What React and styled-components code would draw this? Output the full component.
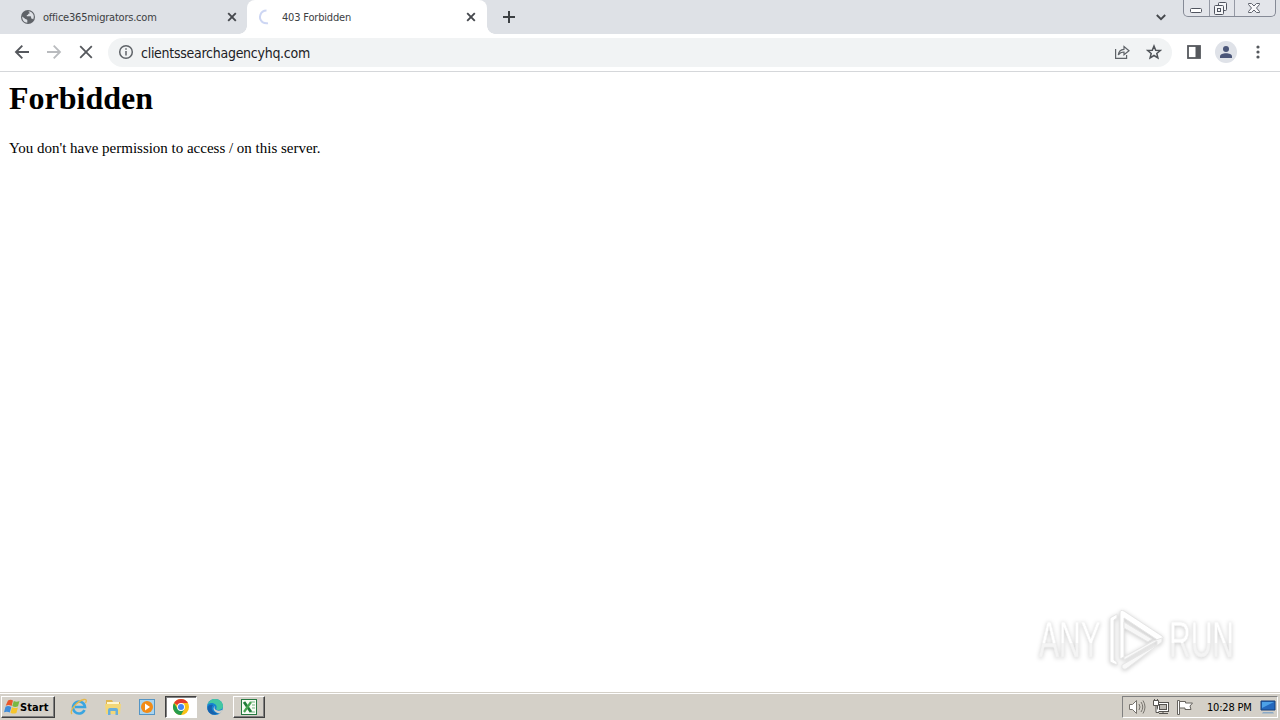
import React from 'react';
import styled, { createGlobalStyle, css } from 'styled-components';

const App = () => {
  return (
    <>
      <GlobalStyle />
      <StyledScreen>
        <TabStrip />
        <Toolbar />
        <StyledPage>
          <StyledTitle>Forbidden</StyledTitle>
          <StyledMessage>You don't have permission to access / on this server.</StyledMessage>
          <Watermark />
        </StyledPage>
        <Taskbar />
      </StyledScreen>
    </>
  );
};

const CloseIcon = () => (
  <svg width="10" height="10" viewBox="0 0 10 10" fill="none" stroke="#45484d" strokeWidth="1.9">
    <path d="M1.2 1.2l7.6 7.6M8.8 1.2L1.2 8.8" />
  </svg>
);

const TabStrip = () => (
  <StyledTabStrip>
    <StyledTab>
      <svg width="16" height="16" viewBox="0 0 16 16">
        <circle cx="8" cy="8" r="7" fill="#5f6368" />
        <path d="M2.2 7.4l3.2 2.5c.9.5 1.8.3 1.9 1.2v2.6C4.300 13.500 2 11 2.200 7.400z" fill="#dee1e6" />
        <path d="M8.200 2.200c2.200.1 4 1.200 5 3.100.9 1.800.7 3.700-.1 5.300-.5-.9-1-1-2-1V8.300c0-.7-.4-1-1-1H6.800V6c1.200 0 1.400-.2 1.400-1.300h1.200V3.200z" fill="#dee1e6" />
      </svg>
      <StyledTabTitle $indent="7px" $spacing="-0.22px">office365migrators.com</StyledTabTitle>
      <CloseIcon />
    </StyledTab>
    <StyledTab $active>
      <svg width="16" height="16" viewBox="0 0 16 16" fill="none" stroke="#cdd6f3" strokeWidth="2">
        <path d="M9.500 1.500A6.500 6.500 0 0 0 5.500 13.100Q8 14.800 11 14.200" />
      </svg>
      <StyledTabTitle $indent="9px" $spacing="-0.18px">403 Forbidden</StyledTabTitle>
      <CloseIcon />
    </StyledTab>
    <StyledNewTab>
      <svg width="12" height="12" viewBox="0 0 12 12" stroke="#3c4043" strokeWidth="2">
        <path d="M6 0v12M0 6h12" />
      </svg>
    </StyledNewTab>
    <StyledTabSearch>
      <svg width="10" height="7" viewBox="0 0 10 7" fill="none" stroke="#45484d" strokeWidth="1.9">
        <path d="M.8 1L5 5.200 9.200 1" />
      </svg>
    </StyledTabSearch>
    <StyledWindowControls>
      <StyledControl $width="25px">
        <svg width="24" height="16" viewBox="0 0 24 16">
          <rect x="6.500" y="8.500" width="11" height="4" rx="1" fill="#fff" stroke="#50545f" />
        </svg>
      </StyledControl>
      <StyledControl $width="25px">
        <svg width="24" height="16" viewBox="0 0 24 16" fill="#f5f6f8" stroke="#50545f">
          <rect x="8.500" y="2.500" width="8" height="8" rx="1" />
          <rect x="4.500" y="5.500" width="9" height="9" rx="1" />
          <rect x="7.500" y="8.500" width="3" height="3" />
        </svg>
      </StyledControl>
      <StyledControl $width="41px">
        <svg width="40" height="16" viewBox="0 0 40 16" fill="#f8f8fa" stroke="#60646e">
          <path d="M13.500 3.500h3l2.500 2.500 2.500-2.500h3v1L21.500 8l3 3.500v1h-3L19 10l-2.500 2.500h-3v-1L16.500 8l-3-3.500z" />
        </svg>
      </StyledControl>
    </StyledWindowControls>
  </StyledTabStrip>
);

const Toolbar = () => (
  <StyledToolbar>
    <StyledNav>
      <svg width="16" height="16" viewBox="0 0 16 16" fill="none" stroke="#55585d" strokeWidth="1.9">
        <path d="M15 8H2M8.300 1.700L2 8l6.300 6.300" />
      </svg>
      <svg width="16" height="16" viewBox="0 0 16 16" fill="none" stroke="#b9bbbe" strokeWidth="1.800">
        <path d="M1 8h13M7.700 1.700L14 8l-6.300 6.300" />
      </svg>
      <svg width="16" height="16" viewBox="0 0 16 16" fill="none" stroke="#55585d" strokeWidth="1.800">
        <path d="M2.200 2.200l11.600 11.600M13.800 2.200L2.200 13.800" />
      </svg>
    </StyledNav>
    <StyledOmnibox>
      <svg width="16" height="16" viewBox="0 0 16 16" fill="none" stroke="#5f6368" strokeWidth="1.500">
        <circle cx="8" cy="8" r="6.300" />
        <path d="M8 7v4.500M8 4.300v1.500" />
      </svg>
      <StyledUrl>clientssearchagencyhq.com</StyledUrl>
      <StyledOmniboxActions>
        <svg width="16" height="16" viewBox="0 0 16 16" fill="none" stroke="#5f6368" strokeWidth="1.200">
          <path d="M1.600 5v9.400h11V11" />
          <path d="M4.300 11c.3-3.600 2.300-5.500 5.700-5.700V2.500L15 6.700 10 10.700V8C7.500 8 5.600 9 4.300 11z" />
        </svg>
        <svg width="16" height="16" viewBox="0 0 16 16" fill="none" stroke="#4f5358" strokeWidth="1.500">
          <path d="M8 2l1.700 4.200 4.600.3-3.500 3 1.100 4.400L8 11.500l-3.900 2.400 1.100-4.400-3.500-3 4.600-.3z" />
        </svg>
      </StyledOmniboxActions>
    </StyledOmnibox>
    <StyledToolbarActions>
      <svg width="14" height="14" viewBox="0 0 14 14">
        <rect x="1" y="1" width="12" height="12" fill="#fff" stroke="#55585d" strokeWidth="1.800" />
        <path d="M8.500 1H13v12H8.500z" fill="#55585d" />
      </svg>
      <StyledAvatar>
        <svg width="14" height="14" viewBox="0 0 14 14" fill="#4a5578">
          <circle cx="7" cy="4" r="3" />
          <path d="M1 13v-1.500C1 9.400 4 8.300 7 8.300s6 1.100 6 3.200V13z" />
        </svg>
      </StyledAvatar>
      <svg width="4" height="16" viewBox="0 0 4 16" fill="#55585d">
        <circle cx="2" cy="3" r="1.600" />
        <circle cx="2" cy="8" r="1.600" />
        <circle cx="2" cy="13" r="1.600" />
      </svg>
    </StyledToolbarActions>
  </StyledToolbar>
);

const Watermark = () => (
  <StyledWatermark>
    <StyledWatermarkWord>
      <StyledWatermarkText>ANY</StyledWatermarkText>
    </StyledWatermarkWord>
    <svg width="60" height="66" viewBox="0 0 60 66" fill="#fff" stroke="#e6e6e6" strokeWidth="1">
      <path d="M4 11l7-4v4l-3 2v40l3 2v3l-7-3z" />
      <path fillRule="evenodd" d="M14 6q0-4 4-2l38 25q2 1 0 3l-3 2-35-23v39l-4 2z" />
      <path d="M18 15l28 17-4 3-24-14z" fill="#f7f7f7" />
      <path d="M18 50l29-16 9-3v4L20 62q-2 1-4-1v-3l35-20v-4L18 53z" fill="#f8f8f8" />
    </svg>
    <StyledWatermarkWord $indent="3px">
      <StyledWatermarkText>RUN</StyledWatermarkText>
    </StyledWatermarkWord>
  </StyledWatermark>
);

const Taskbar = () => (
  <StyledTaskbar>
    <StyledStart>
      <svg width="16" height="16" viewBox="0 0 16 16">
        <path d="M4 1.500C6 .2 7.500.5 9 1.500L7.600 7C5.500 5.700 3.700 5.800 1.700 6.800z" fill="#e9572b" />
        <path d="M9.800 2c2 1 3.700 1 5.700 0L14 7.300c-2 1-3.900.9-5.700-.2z" fill="#79b843" />
        <path d="M1.500 7.700c1.900-.9 3.900-.8 5.800.3l-1.500 5.600C4 12.500 2.100 12.400 0 13.300z" fill="#3f8ddb" />
        <path d="M8 8.300c1.900 1 3.800 1.100 5.900.1l-1.500 5.500c-2 1-4.100.9-5.900-.2z" fill="#f6c52c" />
      </svg>
      Start
    </StyledStart>
    <StyledTaskItems>
      <StyledTaskItem>
        <svg width="18" height="18" viewBox="0 0 18 18" fill="none">
          <path d="M14.500 12A6 6 0 1 1 15 9H5" stroke="#3aa5e0" strokeWidth="2.600" />
          <path d="M2 16C-1 13 7 3 14 1.500c3-.5 2.500 2 1.500 3.500" stroke="#e5b84b" strokeWidth="1.300" />
        </svg>
      </StyledTaskItem>
      <StyledTaskItem>
        <svg width="18" height="18" viewBox="0 0 18 18">
          <path d="M2 2h6l1 2h7v11H2z" fill="#e0b752" />
          <path d="M3 4h12v3H3z" fill="#fff6cf" />
          <path d="M1 6h16l-1 10H2z" fill="#f3d778" />
          <path d="M4 17v-5q0-2 2-2h6q2 0 2 2v5h-2.500v-4h-5v4z" fill="#68aedb" />
        </svg>
      </StyledTaskItem>
      <StyledTaskItem>
        <svg width="18" height="18" viewBox="0 0 18 18">
          <rect x="1.500" y="1.500" width="15" height="15" fill="#a9d4ef" stroke="#5495c5" />
          <circle cx="9" cy="9" r="6" fill="#f28b16" />
          <path d="M7 5.500v7l5-3.500z" fill="#fff" />
        </svg>
      </StyledTaskItem>
      <StyledTaskItem $state="pressed">
        <svg width="18" height="18" viewBox="0 0 18 18">
          <circle cx="9" cy="9" r="8" fill="#fbc116" />
          <path d="M9 9L2.070 5A8 8 0 0 1 15.930 5H9z" fill="#e33b2e" />
          <path d="M2.070 5A8 8 0 0 0 9 17l3.400-6L9 9 5.800 10.900z" fill="#269c4c" />
          <circle cx="9" cy="9" r="3.900" fill="#fff" />
          <circle cx="9" cy="9" r="3" fill="#4285f4" />
        </svg>
      </StyledTaskItem>
      <StyledTaskItem>
        <svg width="18" height="18" viewBox="0 0 18 18">
          <circle cx="9" cy="9" r="8" fill="#1684d2" />
          <path d="M1.500 7C3 2.500 6 1 9 1c5 0 8 3.500 8 7 0 3-2.500 4-5 4-2 0-2-1-1.500-2C11.500 7 8 4.500 5 5c-1.800.3-2.800 1-3.500 2z" fill="#43c7a2" />
          <path d="M7 7c-3 3-.5 8 5 8.500-5 3-10.500-.5-10.500-5C1.500 8 4 6 7 7z" fill="#1762ad" />
          <path d="M9 8c-2 3 2 6 7 4l.5 1c-1 1-2 2-3 2.500C8 14.500 6 10 9 8z" fill="#d4d0c8" />
        </svg>
      </StyledTaskItem>
      <StyledTaskItem $state="raised">
        <svg width="18" height="18" viewBox="0 0 18 18" fill="none">
          <rect x="1.500" y="1.500" width="15" height="15" fill="#f8fcf5" stroke="#257840" />
          <path d="M11 4h4M12 7h3M12 10h3M11 14h4" stroke="#71b37e" />
          <path d="M4 4l7 10" stroke="#207c39" strokeWidth="2.800" />
          <path d="M11 4L4 14" stroke="#47a452" strokeWidth="2.200" />
        </svg>
      </StyledTaskItem>
    </StyledTaskItems>
    <StyledTray>
      <svg width="18" height="16" viewBox="0 0 18 16" fill="none" stroke="#76736d">
        <path d="M1.500 5.500h3l4-4v13l-4-4h-3z" fill="#fff" />
        <path d="M11 5q2 3 0 6M13 3q3.500 5 0 10M15 1.500q4 6.500 0 13" />
      </svg>
      <svg width="18" height="16" viewBox="0 0 18 16" fill="none" stroke="#55534f">
        <rect x="5.500" y="3.500" width="11" height="9" fill="#fff" />
        <rect x="7.500" y="5.500" width="7" height="5" fill="#bbb8b2" />
        <path d="M7 14.500h9M11 12v2" />
        <path d="M2.500 0v2M5.500 0v2M1.500 1.500h5v5h-5zM4 7v6.500h3" fill="#fff" />
      </svg>
      <svg width="18" height="16" viewBox="0 0 18 16" fill="#fff" stroke="#67645f">
        <path d="M1.500 1.500h2v14h-2z" />
        <path d="M3.500 2.500h6v1.500h7l-2.500 3 1 3.500H9V9H3.500z" />
      </svg>
      <StyledClock>10:28 PM</StyledClock>
      <svg width="16" height="14" viewBox="0 0 16 14">
        <path d="M1 1h14v9H1z" fill="#2468bd" stroke="#173f79" />
        <path d="M2 2h12L2 8z" fill="#4da1e7" />
        <path d="M3 12h10l1 1.500H2z" fill="#8aa9c6" />
      </svg>
    </StyledTray>
  </StyledTaskbar>
);

const GlobalStyle = createGlobalStyle`
  body {
    margin: 0;
    overflow: hidden;
  }

  svg {
    display: block;
    flex-shrink: 0;
  }
`;

const StyledScreen = styled.div`
  display: flex;
  flex-direction: column;
  width: 1280px;
  height: 720px;
  background: #fff;
  color: #000;
  font-family: 'DejaVu Sans Condensed', 'DejaVu Sans', sans-serif;
`;

const StyledTabStrip = styled.header`
  display: flex;
  height: 34px;
  background: #dee1e6;
`;

const StyledTab = styled.div`
  display: flex;
  align-items: center;
  box-sizing: border-box;
  width: 240px;
  height: 34px;
  padding: 0 11px 0 10px;
  color: #3c4043;

  &:first-child {
    width: 247px;
    padding: 0 10px 0 20px;
  }

  ${({ $active }) =>
    $active &&
    css`
      position: relative;
      background: #fff;
      border-radius: 8px 8px 0 0;

      &::before,
      &::after {
        content: '';
        position: absolute;
        bottom: 0;
        width: 8px;
        height: 8px;
      }

      &::before {
        left: -8px;
        background: radial-gradient(circle at 0 0, transparent 7.5px, #fff 8px);
      }

      &::after {
        right: -8px;
        background: radial-gradient(circle at 100% 0, transparent 7.5px, #fff 8px);
      }
    `}
`;

const StyledTabTitle = styled.span`
  flex: 1;
  margin-left: ${({ $indent }) => $indent};
  font-size: 11px;
  letter-spacing: ${({ $spacing }) => $spacing};
  white-space: nowrap;
`;

const StyledNewTab = styled.div`
  display: flex;
  align-items: center;
  margin-left: 16px;
`;

const StyledTabSearch = styled.div`
  display: flex;
  align-items: center;
  margin-left: auto;
  margin-right: 17px;
`;

const StyledWindowControls = styled.div`
  display: flex;
  box-sizing: border-box;
  width: 93px;
  height: 17px;
  margin-right: 4px;
  border: 1px solid #858a96;
  border-top: 0;
  border-radius: 0 0 5px 5px;
  background: #e3e5ea;
`;

const StyledControl = styled.div`
  box-sizing: border-box;
  width: ${({ $width }) => $width};

  & + & {
    border-left: 1px solid #9599a4;
  }
`;

const StyledToolbar = styled.div`
  display: flex;
  align-items: center;
  box-sizing: border-box;
  height: 38px;
  padding-bottom: 1px;
  border-bottom: 1px solid #d5d7da;
`;

const StyledNav = styled.div`
  display: flex;
  gap: 16px;
  padding: 0 14px;
`;

const StyledOmnibox = styled.div`
  display: flex;
  align-items: center;
  box-sizing: border-box;
  width: 1064px;
  height: 29px;
  padding: 0 10px;
  border-radius: 15px;
  background: #f1f3f4;
`;

const StyledUrl = styled.span`
  margin-left: 7px;
  padding-top: 1px;
  color: #202124;
  font-size: 14px;
  letter-spacing: -0.27px;
`;

const StyledOmniboxActions = styled.div`
  display: flex;
  gap: 16px;
  margin-left: auto;
`;

const StyledToolbarActions = styled.div`
  display: flex;
  align-items: center;
  margin-left: 15px;
`;

const StyledAvatar = styled.div`
  display: flex;
  align-items: center;
  justify-content: center;
  width: 22px;
  height: 22px;
  margin: 0 19px 0 14px;
  border-radius: 50%;
  background: #dfe2e8;
`;

const StyledPage = styled.main`
  position: relative;
  flex: 1;
  padding: 8px 9px;
  font-family: 'Liberation Serif', serif;
`;

const StyledTitle = styled.h1`
  margin: 0;
  font-size: 32px;
  line-height: 37px;
`;

const StyledMessage = styled.p`
  margin: 22px 0 0;
  font-size: 15px;
  line-height: 18px;
  letter-spacing: -0.01px;
`;

const StyledWatermark = styled.div`
  position: absolute;
  top: 535px;
  left: 1039px;
  display: flex;
  align-items: center;
  filter: drop-shadow(0 1px 2px #ccc);
`;

const StyledWatermarkWord = styled.div`
  width: 64px;
  margin-left: ${({ $indent }) => $indent || 0};
  margin-right: 3px;
`;

const StyledWatermarkText = styled.span`
  display: block;
  width: max-content;
  background: linear-gradient(#fff 55%, #f4f4f4 55%);
  background-clip: text;
  color: transparent;
  -webkit-text-stroke: 0.4px #eee;
  font-family: 'Liberation Sans', sans-serif;
  font-size: 50px;
  line-height: 56px;
  transform: scaleX(0.6);
  transform-origin: left;
`;

const StyledTaskbar = styled.footer`
  display: flex;
  align-items: center;
  box-sizing: border-box;
  height: 28px;
  padding: 1px 2px 0 1px;
  border-top: 1px solid #d4d0c8;
  background: #d4d0c8;
  box-shadow: inset 0 1px #fff;
  font-size: 11px;
`;

const StyledStart = styled.button`
  display: flex;
  align-items: center;
  gap: 0;
  box-sizing: border-box;
  width: 54px;
  height: 22px;
  padding: 0 2px;
  border: 1px solid;
  border-color: #fff #404040 #404040 #fff;
  background: #d4d0c8;
  box-shadow: inset -1px -1px #808080;
  color: #000;
  font: bold 11px 'DejaVu Sans Condensed', sans-serif;
  letter-spacing: 0.1px;
`;

const StyledTaskItems = styled.div`
  display: flex;
  gap: 2px;
  margin-left: 8px;
`;

const StyledTaskItem = styled.div`
  display: flex;
  align-items: center;
  justify-content: center;
  box-sizing: border-box;
  width: 32px;
  height: 22px;
  border: 1px solid transparent;

  ${({ $state }) =>
    $state === 'pressed' &&
    css`
      border-color: #404040 #fff #fff #404040;
      background: #fff;
      box-shadow: inset 1px 1px #808080;
    `}

  ${({ $state }) =>
    $state === 'raised' &&
    css`
      border-color: #fff #404040 #404040 #fff;
      box-shadow: inset -1px -1px #808080;
    `}
`;

const StyledTray = styled.div`
  display: flex;
  align-items: center;
  gap: 6px;
  box-sizing: border-box;
  width: 156px;
  height: 22px;
  margin-left: auto;
  padding-left: 5px;
  border: 1px solid;
  border-color: #808080 #fff #fff #808080;
`;

const StyledClock = styled.span`
  margin-left: 7px;
  margin-right: 2px;
  white-space: nowrap;
  letter-spacing: -0.2px;
`;

export default App;
